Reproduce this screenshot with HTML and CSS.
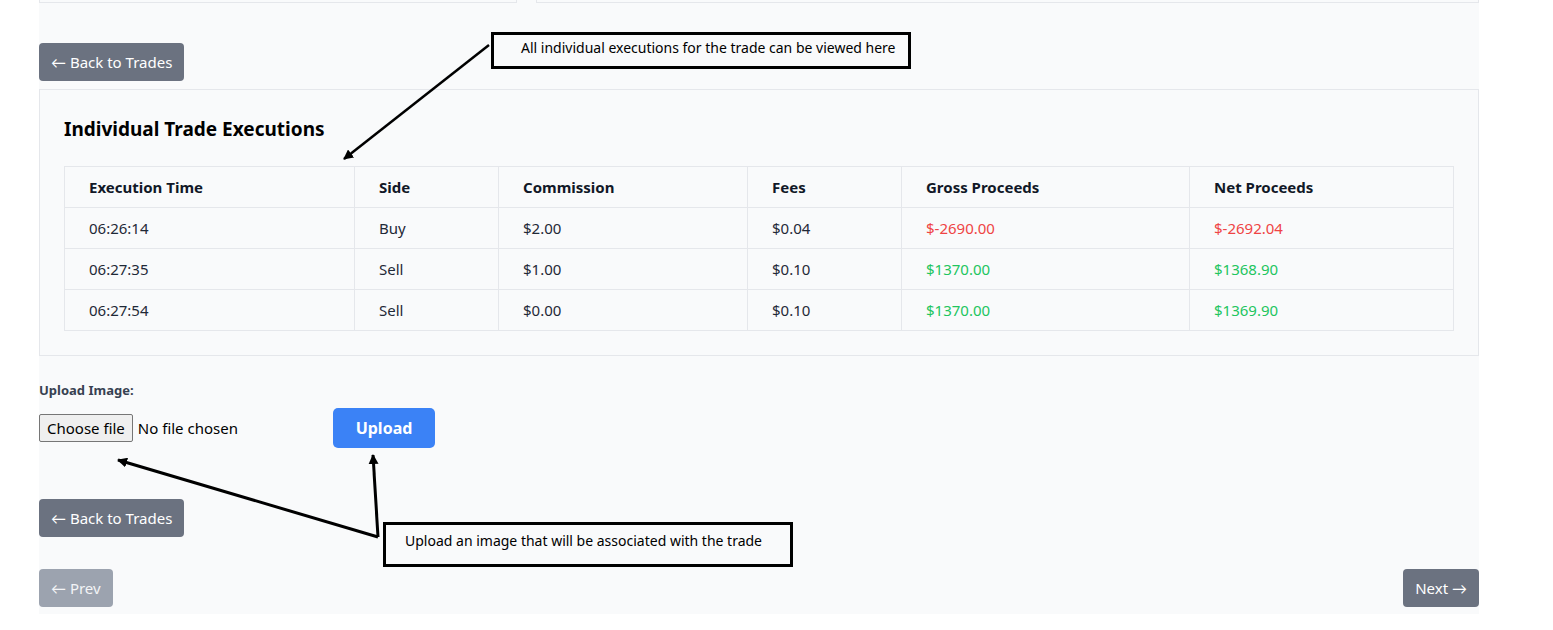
FILE: index.html
```html
<!DOCTYPE html>
<html lang="en">
<head>
<meta charset="utf-8">
<title>Trade Executions</title>
<link rel="stylesheet" href="styles.css">
</head>
<body>
<div class="page">
  <div class="top-row">
    <div class="stub stub-left"></div>
    <div class="stub stub-right"></div>
  </div>

  <a class="btn btn-gray back-top" href="#">← Back to Trades</a>

  <section class="card">
    <h2 class="card-title">Individual Trade Executions</h2>
    <table class="exec-table">
      <colgroup>
        <col class="c1"><col class="c2"><col class="c3"><col class="c4"><col class="c5"><col class="c6">
      </colgroup>
      <thead>
        <tr><th>Execution Time</th><th>Side</th><th>Commission</th><th>Fees</th><th>Gross Proceeds</th><th>Net Proceeds</th></tr>
      </thead>
      <tbody>
        <tr><td>06:26:14</td><td>Buy</td><td>$2.00</td><td>$0.04</td><td class="neg">$-2690.00</td><td class="neg">$-2692.04</td></tr>
        <tr><td>06:27:35</td><td>Sell</td><td>$1.00</td><td>$0.10</td><td class="pos">$1370.00</td><td class="pos">$1368.90</td></tr>
        <tr><td>06:27:54</td><td>Sell</td><td>$0.00</td><td>$0.10</td><td class="pos">$1370.00</td><td class="pos">$1369.90</td></tr>
      </tbody>
    </table>
  </section>

  <div class="upload">
    <div class="upload-label">Upload Image:</div>
    <div class="upload-row">
      <div class="file-input">
        <span class="file-btn">Choose file</span>
        <span class="file-text">No file chosen</span>
      </div>
      <button class="btn btn-blue">Upload</button>
    </div>
  </div>

  <a class="btn btn-gray back-bottom" href="#">← Back to Trades</a>

  <div class="pager">
    <a class="btn btn-gray btn-disabled" href="#">← Prev</a>
    <a class="btn btn-gray" href="#">Next →</a>
  </div>
</div>

<div class="note note-1">All individual executions for the trade can be viewed here</div>
<div class="note note-2">Upload an image that will be associated with the trade</div>

<svg class="arrows" width="1553" height="630" viewBox="0 0 1553 630">
  <defs>
    <marker id="head2" markerWidth="10" markerHeight="10" refX="9" refY="5" orient="auto" markerUnits="userSpaceOnUse">
      <path d="M0,0 L10,5 L0,10 Z" fill="#000"/>
    </marker>
  </defs>
  <line x1="489" y1="45" x2="344" y2="159" stroke="#000" stroke-width="2.5" marker-end="url(#head2)"/>
  <line x1="378" y1="537" x2="118" y2="460" stroke="#000" stroke-width="3" marker-end="url(#head2)"/>
  <line x1="378" y1="537" x2="373" y2="455" stroke="#000" stroke-width="3" marker-end="url(#head2)"/>
</svg>
</body>
</html>
```

FILE: styles.css
```css
* { box-sizing: border-box; }

body {
  margin: 0;
  background: #ffffff;
  font-family: "Segoe UI", "Noto Sans", Lato, sans-serif;
  color: #1f2937;
  position: relative;
  width: 1553px;
  height: 630px;
  overflow: hidden;
}

.page {
  margin-left: 39px;
  width: 1440px;
  background: #f9fafb;
  padding-bottom: 7px;
}

.top-row {
  display: flex;
  gap: 19px;
}

.stub {
  height: 3px;
  border: 1px solid #e5e7eb;
  border-top: none;
  background: #f9fafb;
}
.stub-left { width: 478px; }
.stub-right { flex: 1; }

.btn {
  display: inline-flex;
  align-items: center;
  justify-content: center;
  height: 38px;
  padding: 0 12px;
  border: none;
  border-radius: 4px;
  font-family: inherit;
  font-size: 15px;
  color: #ffffff;
  text-decoration: none;
  cursor: pointer;
}

.btn-gray { background: #6b7280; }
.btn-disabled { background: #9ca3af; color: #f3f4f6; }

.back-top { margin-top: 40px; margin-bottom: 8px; }

.card {
  border: 1px solid #e5e7eb;
  background: #f9fafb;
  padding: 24px;
  height: 267px;
}

.card-title {
  margin: 0 0 24px 0;
  padding-top: 1px;
  height: 28px;
  font-size: 19px;
  line-height: 28px;
  font-weight: 700;
  color: #000000;
}

.exec-table {
  width: 100%;
  border-collapse: collapse;
  border: 1px solid #e5e7eb;
  font-size: 15px;
}

.c1 { width: 290px; }
.c2 { width: 144px; }
.c3 { width: 249px; }
.c4 { width: 154px; }
.c5 { width: 288px; }
.c6 { width: auto; }

.exec-table th,
.exec-table td {
  border: 1px solid #e5e7eb;
  padding: 10px 24px;
  height: 41px;
  line-height: 20px;
  text-align: left;
}

.exec-table th {
  font-weight: 700;
  color: #111827;
}

.exec-table td { color: #1f2937; }
.exec-table td.neg { color: #ef4444; }
.exec-table td.pos { color: #22c55e; }

.upload { margin-top: 24px; }

.upload-label {
  font-size: 13px;
  line-height: 20px;
  font-weight: 700;
  color: #374151;
}

.upload-row {
  display: flex;
  align-items: center;
  margin-top: 8px;
}

.file-input {
  width: 294px;
  display: flex;
  align-items: center;
  gap: 5px;
  font-size: 15px;
  color: #000;
}

.file-btn {
  display: inline-flex;
  align-items: center;
  height: 28px;
  padding: 0 7px;
  background: #efefef;
  border: 1px solid #767676;
  border-radius: 2px;
}

.btn-blue {
  background: #3b82f6;
  height: 40px;
  width: 102px;
  font-weight: 700;
  font-size: 16px;
  border-radius: 5px;
}

.back-bottom { margin-top: 51px; }

.pager {
  display: flex;
  justify-content: space-between;
  margin-top: 32px;
}

.note {
  position: absolute;
  border: 3px solid #000;
  font-size: 14px;
  color: #000;
  white-space: nowrap;
}

.note-1 {
  left: 491px;
  top: 32px;
  width: 420px;
  height: 37px;
  padding: 3px 0 0 27px;
}

.note-2 {
  left: 383px;
  top: 522px;
  width: 410px;
  height: 45px;
  padding: 6px 0 0 19px;
}

.arrows {
  position: absolute;
  left: 0;
  top: 0;
  pointer-events: none;
}
```
